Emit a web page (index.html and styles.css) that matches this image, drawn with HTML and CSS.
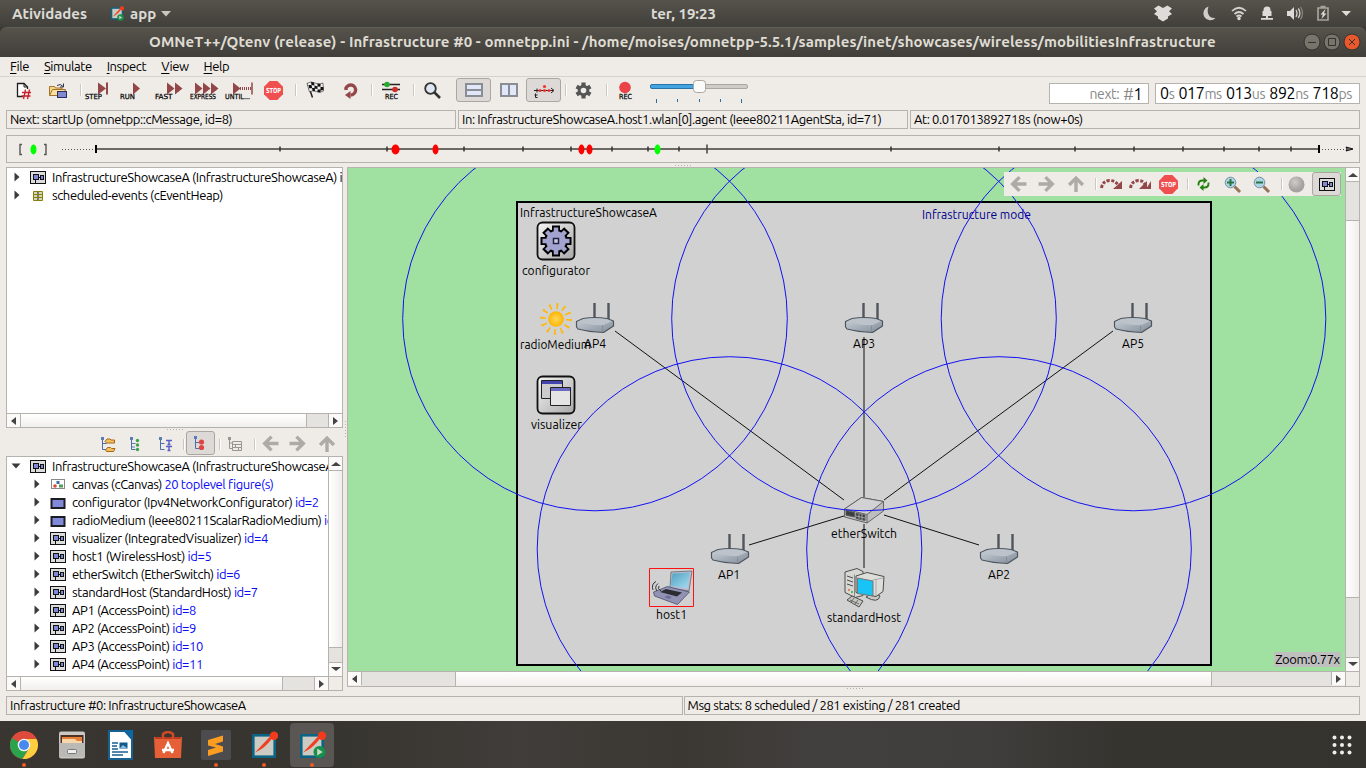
FILE: index.html
```html
<!DOCTYPE html>
<html lang="pt-BR">
<head>
<meta charset="utf-8">
<title>OMNeT++/Qtenv</title>
<link rel="stylesheet" href="styles.css">
</head>
<body>
<svg class="defs" width="0" height="0" aria-hidden="true">
  <defs>
    <linearGradient id="silver" x1="0" y1="0" x2="1" y2="1"><stop offset="0" stop-color="#f4f4f4"/><stop offset="1" stop-color="#a9a9a9"/></linearGradient>
    <linearGradient id="apBody" x1="0" y1="0" x2="1" y2="1"><stop offset="0" stop-color="#ccd2d9"/><stop offset="1" stop-color="#828d99"/></linearGradient>
    <linearGradient id="screen" x1="0" y1="0" x2="1" y2="1"><stop offset="0" stop-color="#4f9fc0"/><stop offset="1" stop-color="#a6def2"/></linearGradient>
    <radialGradient id="sun"><stop offset="0" stop-color="#ffd75a"/><stop offset="1" stop-color="#fdb400"/></radialGradient>
    <radialGradient id="ball" cx=".4" cy=".35"><stop offset="0" stop-color="#cfcdca"/><stop offset="1" stop-color="#a5a29f"/></radialGradient>
    <symbol id="module" viewBox="0 0 16 13"><rect x=".5" y=".5" width="15" height="12" fill="#dcdcdc" stroke="#111"/><path d="M5.500 9v3M8 6.500h3" stroke="#111"/><rect x="3.500" y="3.500" width="5" height="5" fill="#8088d8" stroke="#111"/><rect x="10.500" y="4.500" width="3" height="4" fill="#8088d8" stroke="#111"/></symbol>
    <symbol id="simple" viewBox="0 0 16 13"><rect x="1.500" y="3" width="13" height="9" fill="#8088d8" stroke="#1c1c24" stroke-width="2"/></symbol>
    <symbol id="canvasIcon" viewBox="0 0 16 13"><rect x="1.500" y="1.500" width="13" height="9" fill="#fff" stroke="#888"/><circle cx="5" cy="8" r="1.800" fill="#d84a38"/><rect x="6.500" y="3" width="3" height="3" fill="#3b6ea8"/><rect x="9" y="6.500" width="4" height="3" fill="#4f9e57"/></symbol>
    <symbol id="heap" viewBox="0 0 16 13"><path d="M3.500 2.500h9v9h-9zM3.500 5.500h9M3.500 8.500h9" fill="#d8d8b4" stroke="#86800c"/><path d="M7 4h2M7 7h2M7 10h2" stroke="#222"/></symbol>
    <symbol id="closed" viewBox="0 0 6 10"><path d="M.5.5L5.500 5 .5 9.500z" fill="#3b3b3b"/></symbol>
    <symbol id="opened" viewBox="0 0 10 6"><path d="M.5.5h9L5 5.500z" fill="#3b3b3b"/></symbol>
    <symbol id="arrowL" viewBox="0 0 16 16"><path d="M15.500 8H3M9 1.500L2.500 8 9 14.500" fill="none" stroke="#aeaba7" stroke-width="3.200"/></symbol>
    <symbol id="stop" viewBox="0 0 20 20"><path d="M6.200.5h7.600l5.700 5.700v7.600l-5.700 5.700H6.200L.5 13.800V6.200z" fill="#ef4f4f"/><text x="2.500" y="12.600" textLength="15" lengthAdjust="spacingAndGlyphs" class="stop-text">STOP</text></symbol>
    <symbol id="ap" viewBox="0 0 40 32"><path d="M19.500 1v17M33.500 1v17" stroke="#50565c" stroke-width="2.400"/><path d="M1.500 19.500l6.500-3q12-2 24 0l6.500 2.500v5l-10 6.500Q14 30 3 27l-1.500-2z" fill="url(#apBody)" stroke="#4d565f" stroke-width="1.200" stroke-linejoin="round"/><path d="M3 19.500l6-2.300q12-1.500 23 0l5 2-9.500 4Q14 23 3 19.500z" fill="#bcc3cb"/><path d="M27.500 23.500v6" fill="none" stroke="#7f8993" stroke-width=".8"/></symbol>
    <symbol id="treeLines" viewBox="0 0 16 16"><path d="M2.500 3v10.500h4M2.500 7.500h4" fill="none" stroke="#4b6fa8"/><rect x="1" y="1" width="3" height="3" fill="#5b7cb4"/></symbol>
    <symbol id="omnet" viewBox="0 0 28 28"><rect x="3.300" y="4.300" width="21.400" height="21.400" fill="#cbcbc3" stroke="#0c6484" stroke-width="2.600"/><path d="M5 21.500L20 5.500l2 2C16 15 12 18.500 5 21.500z" fill="#ef4023"/><circle cx="24" cy="4.700" r="4.200" fill="#f23a1d"/></symbol>
    <symbol id="playBadge" viewBox="0 0 14 14"><circle cx="7" cy="7" r="6.500" fill="#17904c"/><path d="M4.500 3.300l6 3.700-6 3.700z" fill="#cdd6c4"/></symbol>
  </defs>
</svg>

<header class="topbar">
  <span class="activities">Atividades</span>
  <svg class="app-icon" width="15" height="15"><use href="#omnet" width="14" height="14"/><use href="#playBadge" x="7" y="8" width="7" height="7"/></svg>
  <span class="app-name">app</span>
  <svg class="caret" width="10" height="6"><path d="M0 0h10L5 5.500z" fill="#c9c7c2"/></svg>
  <span class="clock">ter, 19:23</span>
  <svg class="tray" width="206" height="27" viewBox="1150 0 206 27" fill="#dedcd8">
    <path d="M1158.500 5.500l4.500 2.600 4.500-2.600 4.500 3-3 2.700 3 2.800-4 2.500v2l-5 3-5-3v-2l-4-2.500 3-2.800-3-2.700z"/>
    <path d="M1208.500 6.500a7 7 0 1 0 7 11.500c-6 1-9.500-5-7-11.500z" fill="#cfcdc9"/>
    <g fill="none" stroke="#d5d3cf" stroke-width="1.700"><path d="M1232 11q7-6.500 14 0M1234.500 14q4.500-4 9 0M1236.500 16.500q2.500-2 5 0"/></g><circle cx="1239" cy="18.500" r="1.700"/>
    <path d="M1263.500 10a3.500 3.500 0 0 1 7 0v1h1v5h-9v-5h1zM1266 16h2v2h5v1.800h-12V18h5z"/>
    <path d="M1287 11h3l4-4v13l-4-4h-3z"/><path d="M1296 10q2 3 0 7M1298.300 8.500q3.200 4.500 0 9.500" fill="none" stroke="#d5d3cf" stroke-width="1.300"/><path d="M1300.500 7q4 6 0 12.500" fill="none" stroke="#8a8781" stroke-width="1.200"/>
    <path d="M1320.500 6.500h5m-7.500 1.500h10v12h-10z" fill="none" stroke="#a6a39d" stroke-width="1.700"/><path d="M1325.500 9l-5 5.500h2.300l-1.300 4.500 5-5.500h-2.500z"/>
    <path d="M1341.500 11h9.500l-4.700 5z"/>
  </svg>
</header>

<div class="titlebar-wrap"><div class="titlebar">
  <span class="title">OMNeT++/Qtenv (release) - Infrastructure #0 - omnetpp.ini - /home/moises/omnetpp-5.5.1/samples/inet/showcases/wireless/mobilitiesInfrastructure</span>
  <svg class="window-buttons" width="58" height="20" viewBox="1303 32 58 20"><circle cx="1312" cy="42" r="8" fill="#77746c" stroke="#35342f"/><circle cx="1332" cy="42" r="8" fill="#77746c" stroke="#35342f"/><circle cx="1352" cy="42" r="8" fill="#e9572c" stroke="#35342f"/><path d="M1308 42.500h8M1328.500 38.500h7v7h-7zM1349 39l6 6M1355 39l-6 6" fill="none" stroke="#33322e"/></svg>
</div></div>

<nav class="menubar"><span><u>F</u>ile</span><span><u>S</u>imulate</span><span><u>I</u>nspect</span><span><u>V</u>iew</span><span><u>H</u>elp</span></nav>

<div class="toolbar">
  <svg width="35" height="30" viewBox="6 77 35 30"><path d="M23 96.500h-5.500v-13h6.500l3.500 3.500v2" fill="#fff" stroke="#1d1d1d" stroke-width="1.300"/><path d="M24 83.500v3.500h3.500" fill="none" stroke="#1d1d1d"/><path d="M25.500 89.500l-2 9.500M29.500 89.500l-2 9.500M22 92.500h9M21.500 96h9" stroke="#c8202a" stroke-width="1.300"/></svg>
  <svg width="42" height="30" viewBox="41 77 42 30"><path d="M49.500 95.500v-9h5l1 1.500h6.500v3" fill="#f6d584" stroke="#a4722a"/><path d="M49.500 95.500l3-6h13l-2 6z" fill="#fbe09a" stroke="#a4722a"/><path d="M57 85.500q3.500-2.500 6 1M63.500 83.500v3.500h-3.500" fill="none" stroke="#334"/><rect x="57.500" y="91.500" width="9" height="6" fill="#8088d0" stroke="#2a2e66"/><path d="M80.500 84v12" stroke="#cbc8c3"/><path d="M81.500 84v12" stroke="#fff"/></svg>
  <svg width="30" height="30" viewBox="83 77 30 30"><path d="M98 82.500l8 6-8 6z" fill="#934748"/><path d="M107 82.500v12" stroke="#934748" stroke-width="2"/><text x="85" y="99" textLength="17" lengthAdjust="spacingAndGlyphs" class="tiny">STEP</text></svg>
  <svg width="35" height="30" viewBox="113 77 35 30"><path d="M133 82.500l7 6-7 6z" fill="#934748"/><text x="120" y="99" textLength="15" lengthAdjust="spacingAndGlyphs" class="tiny">RUN</text></svg>
  <svg width="37" height="30" viewBox="148 77 37 30"><path d="M167 82.500l7.500 6-7.500 6zM175 82.500l7.500 6-7.500 6z" fill="#934748"/><text x="155" y="99" textLength="17.500" lengthAdjust="spacingAndGlyphs" class="tiny">FAST</text></svg>
  <svg width="35" height="30" viewBox="185 77 35 30"><path d="M195 82.500l7.500 6-7.500 6zM203 82.500l7.500 6-7.500 6zM211 82.500l7.500 6-7.500 6z" fill="#934748"/><text x="190" y="99" textLength="26" lengthAdjust="spacingAndGlyphs" class="tiny">EXPRESS</text></svg>
  <svg width="36" height="30" viewBox="220 77 36 30"><path d="M233 82.500l7.500 6-7.500 6z" fill="#934748"/><path d="M240 88.500h12" stroke="#934748" stroke-dasharray="1 1" stroke-width="3"/><path d="M252 82.500v12" stroke="#934748" stroke-width="1.500"/><text x="225" y="99" textLength="25" lengthAdjust="spacingAndGlyphs" class="tiny">UNTIL...</text></svg>
  <svg width="44" height="30" viewBox="256 77 44 30"><use href="#stop" x="263.500" y="80.500" width="20" height="20"/><path d="M295.500 84v12" stroke="#cbc8c3"/><path d="M296.500 84v12" stroke="#fff"/></svg>
  <svg width="33" height="30" viewBox="300 77 33 30"><path d="M307.500 83l5 14.500" stroke="#222" stroke-width="1.500"/><path d="M307 83.500q4-3 8-.5t8 0l.5 8q-4 2.500-7.500.5t-6.500.5z" fill="#eee" stroke="#333" stroke-width=".6"/><path d="M311 82l3 .5.500 3-3-.500zM317.500 83.500l3 .3v3l-3-.3zM308.500 85l3 0 .7 3-3 .3zM314.500 85.500l3 1v2.500l-3-.5zM320.500 87h3v3l-3 .5zM312 88l2.500 0 .7 3-2.500.3zM317.500 89.500h3v3l-3-.5z" fill="#111"/></svg>
  <svg width="42" height="30" viewBox="333 77 42 30"><path d="M346 90v-2a5 5 0 1 1 4.500 7" fill="none" stroke="#934748" stroke-width="3.400"/><path d="M350.500 91v8l-5.500-4z" fill="#934748"/><path d="M371.500 84v12" stroke="#cbc8c3"/><path d="M372.500 84v12" stroke="#fff"/></svg>
  <svg width="42" height="30" viewBox="375 77 42 30"><path d="M382 84.500h18M382 89.500h18" stroke="#222" stroke-width="1.300"/><circle cx="387" cy="84.500" r="2.800" fill="#2aab2f"/><circle cx="395" cy="89.500" r="2.800" fill="#d12b2b"/><text x="385" y="99" textLength="13" lengthAdjust="spacingAndGlyphs" class="tiny">REC</text><path d="M413.500 84v12" stroke="#cbc8c3"/><path d="M414.500 84v12" stroke="#fff"/></svg>
  <svg width="39" height="30" viewBox="417 77 39 30"><circle cx="430.500" cy="88.500" r="5.300" fill="#dfe7f2" stroke="#333" stroke-width="1.800"/><path d="M434.500 92.500l5.500 5.500" stroke="#333" stroke-width="2.600"/></svg>
  <span class="btn pressed"><svg width="18" height="14"><rect x="1" y="1" width="16" height="12" fill="#dfe7f8" stroke="#8a8d94" stroke-width="2"/><path d="M1 7h16" stroke="#8a8d94" stroke-width="2"/></svg></span>
  <span class="btn"><svg width="18" height="14"><rect x="1" y="1" width="16" height="12" fill="#dfe7f8" stroke="#8a8d94" stroke-width="2"/><path d="M9 1v12" stroke="#8a8d94" stroke-width="2"/></svg></span>
  <span class="btn pressed"><svg width="22" height="16" viewBox="532 82 22 16"><path d="M533 90.500h19M536 88.500v4M550 88l3 2.500-3 2.500M534.500 93.500v4h2M533.500 95h3" fill="none" stroke="#222"/><circle cx="539" cy="90.500" r="1.500" fill="#e33"/><circle cx="543.500" cy="86.500" r="1.600" fill="#e33"/><circle cx="543.500" cy="90.500" r="1.500" fill="#e33"/><circle cx="548" cy="90.500" r="1.500" fill="#e33"/></svg></span>
  <svg width="51" height="30" viewBox="561 77 51 30"><path d="M565.500 84v12M606.500 84v12" stroke="#cbc8c3"/><path d="M566.500 84v12M607.500 84v12" stroke="#fff"/><path d="M583.500 82.500v16M576.600 86.500l13.800 8M576.600 94.500l13.800-8" stroke="#555" stroke-width="4.200"/><circle cx="583.500" cy="90.500" r="4.300" fill="#efebe7" stroke="#555" stroke-width="3"/></svg>
  <svg width="28" height="30" viewBox="612 77 28 30"><circle cx="625" cy="87.500" r="5.800" fill="#ea4448"/><text x="619" y="99" textLength="13" lengthAdjust="spacingAndGlyphs" class="tiny">REC</text></svg>
  <svg width="115" height="30" viewBox="640 77 115 30"><rect x="650.500" y="84.500" width="97" height="4" rx="1.500" fill="#cfccc8" stroke="#aaa7a2"/><rect x="650.500" y="84.500" width="50" height="4" rx="1.500" fill="#44a4e2" stroke="#2a75a8"/><rect x="693.500" y="80.500" width="12" height="12" rx="3" fill="#fafaf9" stroke="#aaa6a0"/><path d="M656.500 99v4M677.500 99v3M699.500 99v3M720.500 99v3M741.500 99v4" stroke="#2f6f9b"/></svg>
  <div class="readout next"><span class="unit">next:</span><span class="hash">#</span><span class="num">1</span></div>
  <div class="readout time"><span><b>0</b>s</span><span><b>017</b>ms</span><span><b>013</b>us</span><span><b>892</b>ns</span><span><b>718</b>ps</span></div>
</div>

<div class="inforow"><div class="cell">Next: startUp (omnetpp::cMessage, id=8)</div><div class="cell">In: InfrastructureShowcaseA.host1.wlan[0].agent (Ieee80211AgentSta, id=71)</div><div class="cell">At: 0.017013892718s (now+0s)</div></div>

<div class="timeline"><svg width="1352" height="27" viewBox="7 136 1352 27">
  <path d="M22 144.500h-2v10h2M44 144.500h2v10h-2" fill="none" stroke="#555" stroke-width="1.400"/>
  <ellipse cx="33.500" cy="149.500" rx="3" ry="5" fill="#0f0"/>
  <path d="M62 149.500h34M1319 149.500h26" stroke="#555" stroke-dasharray="1 2"/><path d="M96 149h1223" stroke="#6d6a66" stroke-width="2"/>
  <path d="M96 145v8M1319 145v8" stroke="#000" stroke-width="2"/><path d="M707 144.500v9" stroke="#444" stroke-width="1.500"/>
  <path d="M280 146.500v5M387 146.500v5M464 146.500v5M523 146.500v5M571 146.500v5M612 146.500v5M648 146.500v5M679 146.500v5M891 146.500v5M999 146.500v5M1075 146.500v5M1134 146.500v5M1183 146.500v5M1224 146.500v5M1259 146.500v5M1291 146.500v5" stroke="#333" stroke-width="1.500"/>
  <g fill="red"><ellipse cx="395.500" cy="149.500" rx="4" ry="5"/><ellipse cx="435.500" cy="149.500" rx="3" ry="5"/><ellipse cx="581.500" cy="149.500" rx="3" ry="5"/><ellipse cx="589.500" cy="149.500" rx="3" ry="5"/></g><ellipse cx="657.500" cy="149.500" rx="3" ry="5" fill="#0f0"/>
  <path d="M1346 147l7 2-7 2 1-2z" fill="#777" stroke="#111"/>
</svg></div>
<div class="grip-h wide"></div>

<main class="workspace">
  <aside class="side">
    <section class="panel tree-top">
      <div class="rows">
        <div class="row"><svg class="twisty" width="6" height="10"><use href="#closed"/></svg><svg class="icon" width="16" height="13"><use href="#module"/></svg><span>InfrastructureShowcaseA (InfrastructureShowcaseA) id=1</span></div>
        <div class="row"><svg class="twisty" width="6" height="10"><use href="#closed"/></svg><svg class="icon" width="16" height="13"><use href="#heap"/></svg><span>scheduled-events (cEventHeap)</span></div>
      </div>
      <div class="hscroll"><i class="end left"></i><i class="thumb"></i><i class="track t21"></i><i class="end right"></i></div>
    </section>
    <div class="grip-h narrow"></div>
    <div class="sidebar-tools">
      <svg width="24" height="26" viewBox="96 430 24 26"><use href="#treeLines" x="100" y="436" width="16" height="16"/><path d="M105 441.500l2-2.500h3l1 1h3.500v3h-8zM105.500 450l2-2.500h3l1 1h3.500l-1.500 3h-7z" fill="#f3c25e" stroke="#a7681b" stroke-linejoin="round"/></svg>
      <svg width="34" height="26" viewBox="120 430 34 26"><use href="#treeLines" x="129" y="436" width="16" height="16"/><path d="M132 443.500h3M132 447h3" stroke="#5b7cb4"/><g fill="#3fa24a"><circle cx="137.500" cy="440.500" r="1.700"/><circle cx="137.500" cy="445" r="1.700"/><circle cx="137.500" cy="449.500" r="1.700"/></g></svg>
      <svg width="32" height="26" viewBox="154 430 32 26"><use href="#treeLines" x="158" y="436" width="16" height="16"/><path d="M166 440.500h6M169 440v5M167.500 444.500h3M166 446.500h6M169 446v5M167.500 450.500h3" stroke="#5a5ec0" stroke-width="1.400"/><path d="M183.500 439v11" stroke="#cbc8c3"/><path d="M184.500 439v11" stroke="#fff"/></svg>
      <span class="btn pressed small"><svg width="16" height="16"><use href="#treeLines"/><circle cx="8.500" cy="7" r="2.600" fill="#e04545"/><circle cx="8.500" cy="12.500" r="2.600" fill="#e04545"/></svg></span>
      <svg width="44" height="26" viewBox="215 430 44 26"><path d="M219.500 439v11M254.500 439v11" stroke="#cbc8c3"/><path d="M220.500 439v11M255.500 439v11" stroke="#fff"/><path d="M229.500 438v10.500h3M229.500 443h3M232.500 441.500h9v9h-9zM232.500 444.500h9M232.500 447.500h9M235.500 444.500v3M238.500 447.500v3" fill="none" stroke="#999590"/><rect x="228" y="437" width="3" height="3" fill="#999590"/></svg>
      <svg width="25" height="26" viewBox="259 430 25 26"><use href="#arrowL" x="262" y="435" width="17" height="17"/></svg>
      <svg width="27" height="26" viewBox="284 430 27 26"><use href="#arrowL" x="289" y="436" width="17" height="17" transform="rotate(180 297.500 444)"/></svg>
      <svg width="32" height="26" viewBox="311 430 32 26"><use href="#arrowL" x="319" y="436" width="17" height="17" transform="rotate(90 327.500 444)"/></svg>
    </div>
    <section class="panel tree-bottom">
      <div class="tree-body">
        <div class="rows">
          <div class="row"><svg class="twisty" width="10" height="6"><use href="#opened"/></svg><svg class="icon" width="16" height="13"><use href="#module"/></svg><span>InfrastructureShowcaseA (InfrastructureShowcaseA) id=1</span></div>
          <div class="row child"><svg class="twisty" width="6" height="10"><use href="#closed"/></svg><svg class="icon" width="16" height="13"><use href="#canvasIcon"/></svg><span>canvas (cCanvas) <em>20 toplevel figure(s)</em></span></div>
          <div class="row child"><svg class="twisty" width="6" height="10"><use href="#closed"/></svg><svg class="icon" width="16" height="13"><use href="#simple"/></svg><span>configurator (Ipv4NetworkConfigurator) <em>id=2</em></span></div>
          <div class="row child"><svg class="twisty" width="6" height="10"><use href="#closed"/></svg><svg class="icon" width="16" height="13"><use href="#simple"/></svg><span>radioMedium (Ieee80211ScalarRadioMedium) <em>id=3</em></span></div>
          <div class="row child"><svg class="twisty" width="6" height="10"><use href="#closed"/></svg><svg class="icon" width="16" height="13"><use href="#module"/></svg><span>visualizer (IntegratedVisualizer) <em>id=4</em></span></div>
          <div class="row child"><svg class="twisty" width="6" height="10"><use href="#closed"/></svg><svg class="icon" width="16" height="13"><use href="#module"/></svg><span>host1 (WirelessHost) <em>id=5</em></span></div>
          <div class="row child"><svg class="twisty" width="6" height="10"><use href="#closed"/></svg><svg class="icon" width="16" height="13"><use href="#module"/></svg><span>etherSwitch (EtherSwitch) <em>id=6</em></span></div>
          <div class="row child"><svg class="twisty" width="6" height="10"><use href="#closed"/></svg><svg class="icon" width="16" height="13"><use href="#module"/></svg><span>standardHost (StandardHost) <em>id=7</em></span></div>
          <div class="row child"><svg class="twisty" width="6" height="10"><use href="#closed"/></svg><svg class="icon" width="16" height="13"><use href="#module"/></svg><span>AP1 (AccessPoint) <em>id=8</em></span></div>
          <div class="row child"><svg class="twisty" width="6" height="10"><use href="#closed"/></svg><svg class="icon" width="16" height="13"><use href="#module"/></svg><span>AP2 (AccessPoint) <em>id=9</em></span></div>
          <div class="row child"><svg class="twisty" width="6" height="10"><use href="#closed"/></svg><svg class="icon" width="16" height="13"><use href="#module"/></svg><span>AP3 (AccessPoint) <em>id=10</em></span></div>
          <div class="row child"><svg class="twisty" width="6" height="10"><use href="#closed"/></svg><svg class="icon" width="16" height="13"><use href="#module"/></svg><span>AP4 (AccessPoint) <em>id=11</em></span></div>
        </div>
        <div class="vscroll"><i class="end up"></i><i class="thumb"></i><i class="track t15"></i><i class="end down"></i></div>
      </div>
      <div class="hscroll"><i class="end left"></i><i class="thumb"></i><i class="track t32"></i><i class="end right"></i><i class="corner"></i></div>
    </section>
  </aside>
  <div class="grip-v"></div>
  <section class="network">
    <div class="view">
      <svg class="diagram" width="997" height="503" viewBox="348 168 997 503">
        <rect x="517" y="202" width="694" height="463" fill="#d1d1d1" stroke="#000" stroke-width="2"/>
        <path d="M615 331L844 500M864 337V497M1113 331L884 500M749 545l95-29M884 515l95 30M864 524v44" stroke="#111" stroke-width="1"/>
        <text x="520" y="217" textLength="137" lengthAdjust="spacingAndGlyphs">InfrastructureShowcaseA</text>
        <text x="922" y="219" textLength="109" lengthAdjust="spacingAndGlyphs" fill="#00008b">Infrastructure mode</text>
        <g><rect x="537.500" y="222.500" width="37" height="37" rx="5" fill="url(#silver)" stroke="#111" stroke-width="1.800"/><path d="M556 225.500v31M540.500 241h31M545 230l22 22M545 252l22-22" stroke="#000" stroke-width="8"/><circle cx="556" cy="241" r="12" fill="#000"/><path d="M556 227.500v27M542.500 241h27M546.500 231.500l19 19M546.500 250.500l19-19" stroke="#a3a3cf" stroke-width="4.500"/><circle cx="556" cy="241" r="10" fill="#a3a3cf"/><rect x="553.500" y="238.500" width="5" height="5" fill="#ccd" stroke="#224" stroke-width="1.500"/></g>
        <g><circle cx="556" cy="319" r="13" fill="none" stroke="#fdb90d" stroke-width="6" stroke-dasharray="1.800 5.007"/><circle cx="556" cy="319" r="7.800" fill="url(#sun)"/></g>
        <g><rect x="537.500" y="376.500" width="37" height="37" rx="5" fill="url(#silver)" stroke="#111" stroke-width="1.800"/><path d="M541.500 380.500h21v18h-21z" fill="#ccc" stroke="#222"/><path d="M542 381h20v3h-20z" fill="#4444ae"/><path d="M550.500 387.500h20v18h-20z" fill="#e4e4e4" stroke="#222"/><path d="M551 388h19v3h-19z" fill="#6a6ac4"/></g>
        <use href="#ap" x="575" y="302" width="40" height="32"/><use href="#ap" x="844" y="302" width="40" height="32"/><use href="#ap" x="1113" y="302" width="40" height="32"/><use href="#ap" x="710" y="533" width="40" height="32"/><use href="#ap" x="979" y="533" width="40" height="32"/>
        <g stroke="#5a5a5a" stroke-linejoin="round" stroke-width=".9"><path d="M844.500 509l17-11.500 22 4v9.500l-16.500 12-22.500-6z" fill="#bdbdbf"/><path d="M844.500 509l17-11.500 22 4-16.500 13z" fill="#d2d2d4"/><path d="M867 514.500v8.500"/><path d="M846 510.500l8.500 1.800v4.700l-8.500-1.800zM856 513l9 2v5.500l-9-2z" fill="#3b3f42"/><path d="M859 513.500v5.500M862 514v6M856 516l9 2" stroke="#aaa"/></g>
        <g stroke-linejoin="round"><path d="M671 572l21-1-3 20-19-3z" fill="#b9bdd2" stroke="#666" stroke-width=".8"/><path d="M672.500 573.500l17.500-1-3 15.500-16.500-2z" fill="url(#screen)"/><path d="M653.500 592l14-5.500 22 5.500-12 12.500-23-8.500z" fill="#9192b4" stroke="#4c4c68" stroke-width=".8"/><path d="M660 592l6-3 16 3.500-5 4z" fill="#2c2c33"/><path d="M664 597l4-1.500 4 1.500-3 2z" fill="#6e6e94"/><path d="M661 591q-4-2.500-2-5M657 591q-3-4 1-7.500M653 590q-2-6 3-8.500" fill="none" stroke="#333"/><rect x="649.500" y="568.500" width="44" height="38" fill="none" stroke="#f11"/></g>
        <g stroke="#4c4c4c" stroke-linejoin="round"><path d="M845 572l12-3.500 6 3v24l-8 2-10-5z" fill="#d7d7d3"/><path d="M854.500 574.500v22" stroke="#888"/><path d="M847 576l6 2M847 580l6 2M847 584l6 2"/><path d="M866 597q12 7 14-1l-6-4z" fill="#c9c9c5"/><path d="M856 576l11-3.500 17 4-1 15-7 5-20-4z" fill="#ddddd9"/><path d="M857.500 578l15.500 3v15l-15.500-2.500z" fill="#18c3f5" stroke="#777"/><path d="M873 580l10-2M876 580v16" stroke="#aaa"/><path d="M847 600l5-4 11 5-4 6z" fill="#c5c5c1"/><path d="M850 600l9 4M854 598l-3 4M858 600l-3 4" stroke-width=".7"/><circle cx="852" cy="592" r="1" fill="#3a3" stroke="none"/><circle cx="849" cy="590" r="1" fill="#d63" stroke="none"/></g>
        <g class="labels">
          <text x="522" y="275" textLength="68" lengthAdjust="spacingAndGlyphs">configurator</text><text x="520" y="349" textLength="71" lengthAdjust="spacingAndGlyphs">radioMedium</text><text x="584" y="348" textLength="22" lengthAdjust="spacingAndGlyphs">AP4</text><text x="531" y="429" textLength="51" lengthAdjust="spacingAndGlyphs">visualizer</text>
          <text x="853" y="348" textLength="22" lengthAdjust="spacingAndGlyphs">AP3</text><text x="1122" y="348" textLength="22" lengthAdjust="spacingAndGlyphs">AP5</text><text x="718" y="579" textLength="22" lengthAdjust="spacingAndGlyphs">AP1</text><text x="988" y="579" textLength="22" lengthAdjust="spacingAndGlyphs">AP2</text>
          <text x="831" y="538" textLength="66" lengthAdjust="spacingAndGlyphs">etherSwitch</text><text x="827" y="622" textLength="74" lengthAdjust="spacingAndGlyphs">standardHost</text><text x="656" y="619" textLength="31" lengthAdjust="spacingAndGlyphs">host1</text>
        </g>
        <g fill="none" stroke="#1212f2" stroke-width="1"><circle cx="595" cy="318.500" r="192.300"/><circle cx="864" cy="318.500" r="192.300"/><circle cx="1133.500" cy="318.500" r="192.300"/><circle cx="729.500" cy="549" r="192.300"/><circle cx="999" cy="549" r="192.300"/></g>
      </svg>
      <div class="view-tools">
        <svg width="30" height="24" viewBox="1004 172 30 24"><use href="#arrowL" x="1010" y="175.500" width="17" height="17"/></svg>
        <svg width="27" height="24" viewBox="1034 172 27 24"><use href="#arrowL" x="1038" y="175.500" width="17" height="17" transform="rotate(180 1046.500 184)"/></svg>
        <svg width="37" height="24" viewBox="1061 172 37 24"><use href="#arrowL" x="1067.500" y="175.500" width="17" height="17" transform="rotate(90 1076 184)"/><path d="M1095.500 178v12" stroke="#cbc8c3"/><path d="M1096.500 178v12" stroke="#fff"/></svg>
        <svg width="28" height="24" viewBox="1098 172 28 24"><path d="M1101.500 188q1-7 8-7.500 6 0 9 5" fill="none" stroke="#934748" stroke-width="3" stroke-dasharray="3 1.500"/><path d="M1122 181v8h-9z" fill="#934748"/></svg>
        <svg width="30" height="24" viewBox="1126 172 30 24"><path d="M1130.500 188q1-7 8-7.500 5 0 7 5" fill="none" stroke="#934748" stroke-width="3" stroke-dasharray="3 1.500"/><path d="M1147 181v8h-8zM1151 181v8h-5z" fill="#934748"/></svg>
        <svg width="36" height="24" viewBox="1156 172 36 24"><use href="#stop" x="1158.500" y="174.500" width="20" height="20"/><path d="M1187.500 178v12" stroke="#cbc8c3"/><path d="M1188.500 178v12" stroke="#fff"/></svg>
        <svg width="24" height="24" viewBox="1192 172 24 24"><path d="M1198.500 185.500v-1q0-4 4-4h2M1208.500 182.500v1q0 4-4 4h-2" fill="none" stroke="#258212" stroke-width="1.900"/><path d="M1203.500 177v7l4-3.500zM1203.500 184v7l-4-3.500z" fill="#258212"/></svg>
        <svg width="32" height="24" viewBox="1216 172 32 24"><path d="M1234.500 186.500l5.500 5.500" stroke="#957458" stroke-width="3"/><circle cx="1230.500" cy="182.500" r="5.300" fill="#acd5e8" stroke="#74909c"/><path d="M1227 182.500h7M1230.500 179v7" stroke="#2e7440" stroke-width="2"/></svg>
        <svg width="38" height="24" viewBox="1248 172 38 24"><path d="M1263.500 186.500l5.500 5.500" stroke="#957458" stroke-width="3"/><circle cx="1259.500" cy="182.500" r="5.300" fill="#acd5e8" stroke="#74909c"/><path d="M1256 182.500h7" stroke="#2e7440" stroke-width="2"/><path d="M1281.500 178v12" stroke="#cbc8c3"/><path d="M1282.500 178v12" stroke="#fff"/></svg>
        <svg width="26" height="24" viewBox="1286 172 26 24"><circle cx="1296.500" cy="184.500" r="8" fill="url(#ball)"/></svg>
        <span class="btn pressed small"><svg width="16" height="13"><use href="#module"/></svg></span>
      </div>
      <div class="zoom-label">Zoom:0.77x</div>
    </div>
    <div class="vscroll"><i class="end up"></i><i class="track t39"></i><i class="thumb"></i><i class="track t60"></i><i class="end down"></i></div>
    <div class="hscroll"><i class="end left"></i><i class="track t94"></i><i class="thumb"></i><i class="track t120"></i><i class="end right"></i><i class="corner"></i></div>
  </section>
</main>
<div class="grip-h lower"></div>

<footer class="statusbar"><div class="cell">Infrastructure #0: InfrastructureShowcaseA</div><div class="cell">Msg stats: 8 scheduled / 281 existing / 281 created</div></footer>

<div class="dock">
  <div class="launcher run"><svg width="28" height="28"><circle cx="14" cy="14" r="14" fill="#de4a3b"/><path d="M14 14L1.900 7A14 14 0 0 0 12.500 28l6-10z" fill="#2ba24c"/><path d="M14 14l4.500 4.500-6 9.500A14 14 0 0 0 26.500 8H14z" fill="#fdcf3f"/><circle cx="14" cy="14" r="6.300" fill="#f4f4f4"/><circle cx="14" cy="14" r="5" fill="#4889f0"/></svg></div>
  <div class="launcher"><svg width="28" height="28"><rect x="1" y=".5" width="26" height="27" rx="2" fill="#cbc9c5"/><rect x="2.500" y="4" width="23" height="8" fill="#4e3122"/><path d="M4 6h20v6H4z" fill="#e77f39"/><path d="M4 8h13l2 2h5v2H4z" fill="#f8d6a9"/><path d="M1 12h26v14H1z" fill="#bbb9b5"/><rect x="9.500" y="18.500" width="9" height="4" rx="1" fill="#eee" stroke="#777"/></svg></div>
  <div class="launcher"><svg width="26" height="30"><path d="M2 1h16l7 8v20H2z" fill="#fff" stroke="#17608f" stroke-width="2"/><path d="M17 0h9v10z" fill="#0a68a5"/><path d="M5 13h6M5 16h5M5 19h6M5 22h16M5 25h11" stroke="#17608f" stroke-width="1.600"/><rect x="12.500" y="12.500" width="8" height="6" fill="#0f5a8e"/><path d="M13 18l3-3 4 3z" fill="#83bde0"/></svg></div>
  <div class="launcher"><svg width="28" height="28"><path d="M0 6h28l-1 21H1z" fill="#e56036"/><path d="M1 6h26v2H1z" fill="#bd3b1e"/><path d="M9 8V3q5-4 10 0v5" fill="none" stroke="#cf4926" stroke-width="2.500"/><path d="M9.500 22L14 12l4.500 10M8 19h12" fill="none" stroke="#fff" stroke-width="2.300"/></svg></div>
  <div class="launcher run"><svg width="30" height="30"><rect width="30" height="30" rx="2" fill="#4c4c4e"/><path d="M7 10l15-4.500v6L14 14l8 2.500v5L7 26v-6l8-2.500-8-2z" fill="#fb9d20"/></svg></div>
  <div class="launcher run"><svg width="28" height="28"><use href="#omnet"/></svg></div>
  <div class="launcher run active"><svg width="28" height="28"><use href="#omnet"/><use href="#playBadge" x="15" y="14.500" width="13" height="13"/></svg></div>
  <svg class="apps" width="20" height="20" fill="#eeeeec"><circle cx="2.500" cy="2.500" r="2"/><circle cx="10" cy="2.500" r="2"/><circle cx="17.500" cy="2.500" r="2"/><circle cx="2.500" cy="10" r="2"/><circle cx="10" cy="10" r="2"/><circle cx="17.500" cy="10" r="2"/><circle cx="2.500" cy="17.500" r="2"/><circle cx="10" cy="17.500" r="2"/><circle cx="17.500" cy="17.500" r="2"/></svg>
</div>
</body>
</html>
```

FILE: styles.css
```css
* { box-sizing: border-box; }
body { margin: 0; width: 1366px; height: 768px; overflow: hidden; display: flex; flex-direction: column; background: #efebe7; color: #000; font: 13px/18px Ubuntu, "Noto Sans", sans-serif; letter-spacing: -0.41px; }
body > * { flex: none; }
svg { display: block; flex: none; }
.defs { position: absolute; }
em { font-style: normal; color: #0a0af5; }

.topbar { height: 27px; display: flex; align-items: center; background: linear-gradient(#56534c, #413f3a); color: #dcdad5; font-weight: 600; font-size: 15px; letter-spacing: 0; padding-left: 12px; }
.activities { width: 98px; }
.app-name { margin-left: 5px; width: 31px; }
.clock { margin-left: 480px; width: 70px; white-space: nowrap; }
.tray { margin-left: auto; margin-right: 10px; }

.titlebar-wrap { background: #3b3934; height: 30px; }
.titlebar { height: 30px; display: flex; align-items: center; border-radius: 7px 7px 0 0; border-top: 1px solid #625f58; background: linear-gradient(#56534c, #403e39); padding: 0 5px 1px 149px; justify-content: space-between; }
.title { font-size: 15px; font-weight: 700; letter-spacing: 0.09px; color: #dfdbd2; white-space: nowrap; }

.menubar { height: 20px; display: flex; gap: 15px; padding-left: 10px; border-bottom: 1px solid #d6d2cd; line-height: 19px; }
.menubar u { text-underline-offset: 2px; }

.toolbar { height: 33px; display: flex; padding: 0 6px; align-items: flex-start; }
.tiny { font: 7px "DejaVu Sans", sans-serif; letter-spacing: 0; fill: #000; stroke: #000; stroke-width: 0.25px; }
.stop-text { font: bold 7px "DejaVu Sans", sans-serif; letter-spacing: 0; fill: #fff; }
.btn { width: 35px; height: 24px; margin-top: 1px; display: grid; place-items: center; border: 1px solid transparent; border-radius: 3px; flex: none; }
.btn.pressed { background: #dcd9d6; border-color: #aaa6a2; }
.btn.small { width: 29px; height: 24px; }
.readout { height: 21px; margin-top: 6px; background: #fff; border: 1px solid #b6b3ae; display: flex; align-items: center; color: #888; font-size: 14px; letter-spacing: -0.4px; }
.next { width: 100px; margin-left: 294px; justify-content: flex-end; padding-right: 6px; }
.hash { font-size: 16px; margin-left: 4px; }
.num { color: #000; font-size: 16px; }
.time { width: 205px; margin-left: 6px; padding: 0 7px 0 4px; justify-content: space-between; }
.time b { color: #000; font-weight: 400; font-size: 16px; }

.inforow { display: flex; gap: 2px; padding: 0 6px; height: 19px; }
.cell { border: 1px solid #b6b3ae; height: 19px; line-height: 16px; padding-left: 3px; flex: 1; white-space: nowrap; }
.timeline { margin: 6px 6px 0; height: 28px; border: 1px solid #b6b3ae; }
.grip-h { height: 4px; background: repeating-linear-gradient(90deg, #b4b0ab 0 1px, transparent 1px 3px) no-repeat center / 16px 1px; }

.workspace { display: flex; height: 524px; padding: 0 6px; }
.side { width: 337px; display: flex; flex-direction: column; }
.panel { border: 1px solid #b6b3ae; background: #fff; display: flex; flex-direction: column; overflow: hidden; }
.tree-top { height: 261px; }
.rows { flex: 1; overflow: hidden; min-width: 0; }
.grip-h.narrow { height: 2px; }
.grip-h.wide { height: 4px; }
.row { height: 18px; display: flex; align-items: center; white-space: nowrap; padding-left: 7px; }
.row.child { padding-left: 27px; }
.row.child span { margin-left: 1px; }
.twisty { margin-right: 10px; }
.twisty[width="10"] { margin-left: -3px; margin-right: 9px; }
.icon { margin-right: 6px; }
.row.child .icon { margin-right: 5px; margin-left: 1px; }
.row .twisty:not([width="10"]) + .icon { margin-left: 0; }
.sidebar-tools { height: 26px; padding-left: 90px; display: flex; }
.tree-bottom { height: 235px; }
.tree-body { flex: 1; display: flex; min-height: 0; }

.hscroll { height: 14px; display: flex; border-top: 1px solid #b6b3ae; flex: none; }
.vscroll { width: 14px; display: flex; flex-direction: column; border-left: 1px solid #b6b3ae; flex: none; }
.hscroll i, .vscroll i { display: grid; place-items: center; flex: none; }
.end { background: #fbfaf9; width: 14px; height: 14px; }
.vscroll .end { width: 13px; }
.hscroll .end { height: 13px; }
.end::before { content: ""; border: 4px solid transparent; }
.left { border-right: 1px solid #b6b3ae; }
.right { border-left: 1px solid #b6b3ae; }
.up { border-bottom: 1px solid #b6b3ae; }
.down { border-top: 1px solid #b6b3ae; }
.left::before { border-right: 5px solid #444; border-left-width: 0; }
.right::before { border-left: 5px solid #444; border-right-width: 0; margin-right: 1px; }
.up::before { border-bottom-color: #444; border-top-width: 0; border-left-width: 5px; border-right-width: 5px; }
.down::before { border-top-color: #444; border-bottom-width: 0; border-left-width: 5px; border-right-width: 5px; margin-bottom: 2px; }
.hscroll .thumb { flex: 1; background: linear-gradient(#fff, #f1efec); }
.vscroll .thumb { flex: 1; background: linear-gradient(90deg, #fff, #f1efec); }
.track { background: #e4e3df; }
.hscroll .track { border: 0 solid #b6b3ae; border-left-width: 1px; }
.vscroll .track { border-top: 1px solid #b6b3ae; }
.t21 { width: 22px; }
.t32 { width: 32px; }
.t15 { height: 15px; }
.hscroll .t94 { width: 94px; border-left-width: 0; border-right-width: 1px; }
.t120 { width: 120px; }
.vscroll .t39 { height: 39px; border-top: 0; border-bottom: 1px solid #b6b3ae; }
.t60 { height: 60px; }
.corner { width: 14px; border-left: 1px solid #b6b3ae; background: #efebe7; }

.grip-v { width: 4px; background: repeating-linear-gradient(#b4b0ab 0 1px, transparent 1px 3px) no-repeat center / 1px 16px; }
.network { width: 1013px; height: 520px; border: 1px solid #b6b3ae; display: grid; grid-template: 503px 15px / 997px 14px; }
.network .hscroll { grid-column: 1 / 3; height: 15px; }
.network .hscroll .corner { width: 14px; }
.view { position: relative; background: #a0e0a0; overflow: hidden; }
.diagram text { font-size: 13px; letter-spacing: 0; }
.view-tools { position: absolute; left: 656px; top: 4px; height: 24px; display: flex; background: #efebe7; }
.view-tools .btn { margin-top: 0; }
.zoom-label { position: absolute; right: 4px; bottom: 4px; width: 67px; height: 15px; background: #bfbfbf; line-height: 14px; text-align: center; }

.grip-h.lower { height: 5px; margin-top: -5px; margin-left: 344px; }
.statusbar { display: flex; gap: 1px; margin-top: 5px; padding: 0 6px; height: 25px; }

.dock { height: 47px; display: flex; background: linear-gradient(90deg, #393531, #37352f 25%, #403d3a 38%, #3b3833 50%, #42403e 60%, #403e3c 72%, #35342f 82%, #34332e); }
.launcher { width: 48px; height: 47px; position: relative; display: grid; place-items: center; }
.launcher.active { width: 44px; height: 44px; margin: 2px 0 0 2px; border-radius: 4px; background: #595653; }
.launcher.run::after { content: ""; position: absolute; left: 22px; bottom: 1px; width: 4px; height: 4px; border-radius: 50%; background: #ee5a27; }
.launcher.run.active::after { left: 20px; bottom: 0; }
.apps { margin: 14px 14px 0 auto; }
```
